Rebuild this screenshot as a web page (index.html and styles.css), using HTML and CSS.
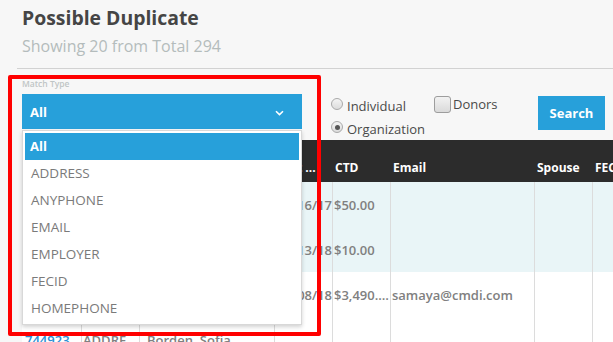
FILE: index.html
```html
<!DOCTYPE html>
<html lang="en">
<head>
    <meta charset="UTF-8">
    <meta name="viewport" content="width=device-width, initial-scale=1.0">
    <title>Possible Duplicate</title>
    <link rel="stylesheet" href="styles.css">
</head>
<body>
    <div class="page">
        <header class="head">
            <h1 class="title">Possible Duplicate</h1>
            <p class="subtitle">Showing 20 from Total 294</p>
        </header>

        <div class="filters">
            <div class="match">
                <div class="match-label">Match Type</div>
                <div class="select">
                    <span>All</span>
                    <svg class="chevron" width="9" height="6" viewBox="0 0 9 6">
                        <path d="M1 1.2 L4.5 4.6 L8 1.2" fill="none" stroke="#fff" stroke-width="1.6"/>
                    </svg>
                </div>
                <ul class="menu">
                    <li class="active">All</li>
                    <li>ADDRESS</li>
                    <li>ANYPHONE</li>
                    <li>EMAIL</li>
                    <li>EMPLOYER</li>
                    <li>FECID</li>
                    <li>HOMEPHONE</li>
                </ul>
            </div>

            <div class="radios">
                <label class="radio"><span class="circle"></span>Individual</label>
                <label class="radio checked"><span class="circle"></span>Organization</label>
            </div>

            <label class="check"><span class="box"></span>Donors</label>

            <button class="search">Search</button>
        </div>

        <div class="table-wrap">
            <table class="results">
                <thead>
                    <tr>
                        <th class="c-id">ID</th>
                        <th class="c-type">Match</th>
                        <th class="c-name">Name</th>
                        <th class="c-date">Last ...</th>
                        <th class="c-ctd">CTD</th>
                        <th class="c-email">Email</th>
                        <th class="c-spouse">Spouse</th>
                        <th class="c-fec">FEC ID</th>
                    </tr>
                </thead>
                <tbody>
                    <tr class="group">
                        <td><a href="#">74492108</a></td>
                        <td>ADDRESS</td>
                        <td class="name">Amaya, Samuel</td>
                        <td class="date">12/16/17</td>
                        <td>$50.00</td>
                        <td></td>
                        <td></td>
                        <td></td>
                    </tr>
                    <tr class="group">
                        <td><a href="#">74492215</a></td>
                        <td>ADDRESS</td>
                        <td class="name">Amaya, Sara</td>
                        <td class="date">03/13/18</td>
                        <td>$10.00</td>
                        <td></td>
                        <td></td>
                        <td></td>
                    </tr>
                    <tr>
                        <td><a href="#">74492297</a></td>
                        <td>ADDRESS</td>
                        <td class="name">Amaya, Sam</td>
                        <td class="date">08/08/18</td>
                        <td>$3,490.00</td>
                        <td>samaya@cmdi.com</td>
                        <td></td>
                        <td></td>
                    </tr>
                    <tr>
                        <td><a href="#">74492361</a></td>
                        <td>ADDRESS</td>
                        <td class="name">Borden, Sofia</td>
                        <td class="date"></td>
                        <td></td>
                        <td></td>
                        <td></td>
                        <td></td>
                    </tr>
                </tbody>
            </table>
        </div>

        <!-- recuadro rojo de la captura -->
        <div class="highlight"></div>
    </div>
</body>
</html>
```

FILE: styles.css
```css
html, body {
    overflow: hidden;
}

body {
    font-family: 'Open Sans', 'Noto Sans', sans-serif;
    margin: 0;
    padding: 0;
    background-color: #f7f7f7;
}

.page {
    position: relative;
    padding: 6px 0 0 17px;
}

.head {
    padding-left: 5px;
    padding-bottom: 12px;
    border-bottom: 1px solid #d2d2d2;
}

.title {
    margin: 0;
    font-size: 19.4px;
    line-height: 24px;
    font-weight: 700;
    color: #454545;
}

.subtitle {
    margin: 6px 0 0;
    font-size: 16px;
    line-height: 20px;
    color: #b4bcbc;
}

/* fila de filtros */
.filters {
    display: flex;
    align-items: flex-start;
    height: 71px;
    box-sizing: border-box;
    padding: 9px 8px 0 5px;
}

.match {
    position: relative;
    width: 280px;
}

.match-label {
    font-size: 8.5px;
    line-height: 12px;
    font-weight: 600;
    color: #bfc5c5;
    margin-bottom: 4px;
}

.select {
    display: flex;
    align-items: center;
    justify-content: space-between;
    height: 35px;
    padding: 0 18px 0 8px;
    background-color: #27a0da;
    color: #ffffff;
    font-size: 13px;
    font-weight: 700;
}

.chevron {
    margin-top: 3px;
}

.menu {
    position: absolute;
    top: calc(100% + 1px);
    left: 0;
    z-index: 5;
    width: 280px;
    box-sizing: border-box;
    margin: 0;
    padding: 2px;
    list-style: none;
    background-color: #ffffff;
    border: 1px solid #d8d8d8;
    box-shadow: 0 2px 4px rgba(0, 0, 0, 0.18);
}

.menu li {
    height: 27px;
    line-height: 27px;
    padding-left: 6px;
    font-size: 13.5px;
    color: #7a7a7a;
}

.menu li.active {
    background-color: #27a0da;
    color: #ffffff;
    font-weight: 700;
    font-size: 13px;
    padding-left: 5px;
}

.radios {
    display: flex;
    flex-direction: column;
    margin: 16px 0 0 29px;
}

.radio {
    display: flex;
    align-items: center;
    height: 23px;
    font-size: 13px;
    color: #4a4a4a;
}

.circle {
    width: 12px;
    height: 12px;
    box-sizing: border-box;
    margin: -3px 4px 0 0;
    border: 1px solid #a9a9a9;
    border-radius: 50%;
    background: linear-gradient(#f4f4f4, #dcdcdc);
    display: flex;
    align-items: center;
    justify-content: center;
}

.radio.checked .circle::after {
    content: "";
    width: 5px;
    height: 5px;
    border-radius: 50%;
    background-color: #555555;
}

.check {
    display: flex;
    align-items: flex-start;
    margin: 18px 0 0 9px;
    font-size: 13px;
    line-height: 16px;
    color: #4a4a4a;
}

.box {
    width: 17px;
    height: 17px;
    box-sizing: border-box;
    margin-right: 2px;
    border: 1px solid #9d9d9d;
    border-radius: 3px;
    background: linear-gradient(#f2f2f2, #dadada);
}

.search {
    margin: 18px 0 0 auto;
    width: 67px;
    height: 34px;
    border: none;
    background-color: #27a0da;
    color: #ffffff;
    font-family: inherit;
    font-size: 13px;
    font-weight: 700;
    padding: 0;
}

/* tabla de resultados */
.table-wrap {
    margin-left: 5px;
    overflow: hidden;
    background-color: #ffffff;
}

.results {
    table-layout: fixed;
    width: 700px;
    border-spacing: 0;
}

.results th {
    height: 42px;
    box-sizing: border-box;
    padding: 0 0 6px 3px;
    vertical-align: bottom;
    text-align: left;
    background-color: #2c2c2c;
    color: #ffffff;
    font-size: 12px;
    line-height: 16px;
    font-weight: 700;
    white-space: nowrap;
}

.c-id { width: 59px; }
.c-type { width: 58px; }
.c-name { width: 135px; }
.c-date { width: 58px; }
.c-ctd { width: 58px; }
.c-email { width: 144px; }
.c-spouse { width: 58px; }
.c-fec { width: 130px; }

.results td {
    height: 45px;
    padding: 0 0 0 1px;
    border-left: 1px solid #dcdcdc;
    font-size: 13px;
    font-weight: 600;
    color: #808080;
    white-space: nowrap;
    overflow: hidden;
    text-overflow: ellipsis;
}

.results td:first-child {
    border-left: none;
    padding-left: 3px;
}

.results td.name {
    padding-left: 7px;
}

.results td.date {
    text-align: right;
}

.results tr.group td {
    background-color: #e9f5f7;
}

.results a {
    color: #2b8fd4;
    text-decoration: none;
}

.highlight {
    position: absolute;
    left: 8px;
    top: 75px;
    width: 313px;
    height: 261px;
    box-sizing: border-box;
    border: 4px solid #ff0000;
    border-radius: 2px;
    z-index: 10;
    pointer-events: none;
}
```
